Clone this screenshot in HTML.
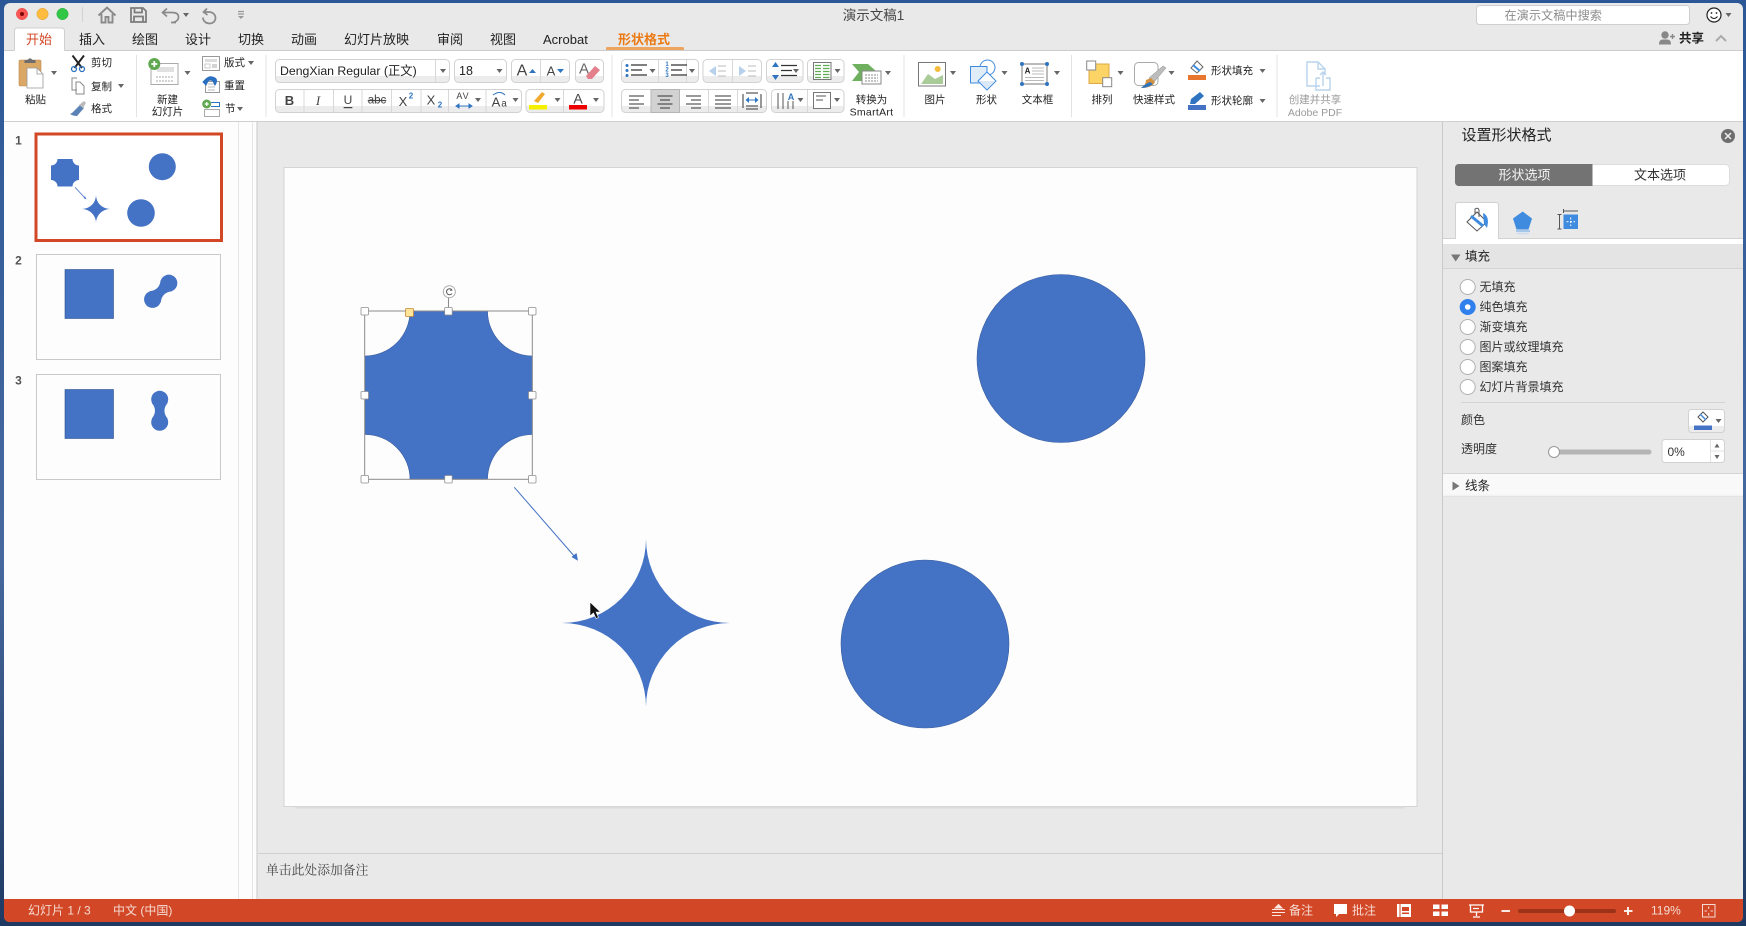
<!DOCTYPE html>
<html lang="zh-CN"><head><meta charset="utf-8"><title>演示文稿1</title>
<style>
html,body{margin:0;padding:0;width:1746px;height:926px;overflow:hidden;background:#2a5590}
svg{display:block;filter:blur(.3px)}
text{font-family:"Liberation Sans","Noto Sans CJK SC",sans-serif;dominant-baseline:central;fill:#222}
.m{text-anchor:middle}
.t{font-size:13px}.r{font-size:10.5px}.g{fill:#9a9a9a}
.p{font-size:12px;fill:#333}.w{fill:#f6dcd4;font-size:12px}
.l{stroke:#d8d8d8;stroke-width:1}
.gl{fill:url(#btn);stroke:#d2d2d2;stroke-width:1}
.h{fill:#fff;stroke:#8f8f8f;stroke-width:.8}
</style></head><body>
<svg width="1746" height="926" viewBox="0 0 1746 926" xmlns="http://www.w3.org/2000/svg">
<defs>
<linearGradient id="desk" x1="0" y1="0" x2="0" y2="1"><stop offset="0" stop-color="#2b5797"/><stop offset=".6" stop-color="#47699f"/><stop offset="1" stop-color="#1e3a63"/></linearGradient>
<linearGradient id="btn" x1="0" y1="0" x2="0" y2="1"><stop offset="0" stop-color="#fff"/><stop offset=".72" stop-color="#fff"/><stop offset=".72" stop-color="#ececec"/><stop offset="1" stop-color="#ececec"/></linearGradient>
<path id="a" d="M-3-2H3L0 2z" fill="#666"/>
<path id="lines" d="M0 0H16M0 5H11M0 10H16" stroke="#333" stroke-width="1.2" fill="none"/>
<g id="db" fill="#4472c4"><circle cx="0" cy="-11.500" r="8.500"/><circle cx="0" cy="11.500" r="8.500"/><path d="M-8-8Q-1.500 0-8 8H8Q1.500 0 8-8z"/></g>
</defs>
<rect width="1746" height="926" fill="url(#desk)"/>
<!-- window -->
<rect x="4" y="3" width="1739" height="919" rx="6" fill="#e9e9e9"/>
<!-- titlebar -->
<circle cx="22" cy="14" r="5.700" fill="#fc5753" stroke="#df4744" stroke-width=".5"/><circle cx="22" cy="14" r="2" fill="#7e0508"/>
<circle cx="42.500" cy="14" r="5.700" fill="#fdbc40" stroke="#de9f34" stroke-width=".5"/>
<circle cx="62.500" cy="14" r="5.700" fill="#33c748" stroke="#27aa35" stroke-width=".5"/>
<path d="M82.500 7V22" stroke="#d2d2d2"/>
<path d="M98.500 15.500l8.500-8 8.500 8M101.500 14V22.500H105.500V17H108.500V22.500H112.500V14" fill="none" stroke="#8a8a8a" stroke-width="1.900"/>
<path d="M131 8H143L146 11V22H131z M134.500 8V12.500H142V8 M134 22V16.500H143V22" fill="none" stroke="#7d7d7d" stroke-width="1.800"/>
<path d="M176 22.500H171C176 22.500 178.500 20 178.500 17 178.500 14 176 12.500 172 12.500H163M167 8.500L162.500 12.500 167 16.500" fill="none" stroke="#8a8a8a" stroke-width="1.700"/>
<use href="#a" x="186" y="15"/>
<path d="M207 8.500L203.500 12 207.500 15M204 12H209C212.800 12 215.500 14.800 215.500 18 215.500 21 213 23.500 209.500 23.500 206 23.500 203 21 203 17.500" fill="none" stroke="#8a8a8a" stroke-width="1.700"/>
<path d="M238 11.500H244M238 14H244" stroke="#999" stroke-width="1.200"/><path d="M238 16H244L241 19z" fill="#999"/>
<text x="873.500" y="15.500" class="m" style="font-size:13.500px;fill:#444">演示文稿1</text>
<rect x="1476.500" y="5.500" width="213" height="19" rx="3" fill="#fff" stroke="#cfcfcf"/>
<text x="1504.500" y="15.500" style="font-size:12.200px;fill:#8c8c8c">在演示文稿中搜索</text>
<circle cx="1714" cy="15" r="7" fill="#fff" stroke="#222" stroke-width="1.200"/><circle cx="1711.500" cy="13" r=".9" fill="#222"/><circle cx="1716.500" cy="13" r=".9" fill="#222"/><path d="M1710.500 16.500Q1714 20.500 1717.500 16.500" fill="none" stroke="#222"/>
<use href="#a" x="1728.500" y="15"/>
<!-- tabs -->
<path d="M14.500 51V31Q14.500 28 17.500 28H61.500Q64.500 28 64.500 31V51z" fill="#fff" stroke="#d0d0d0"/>
<text x="26" y="39.500" class="t" style="fill:#d24726">开始</text>
<text x="79" y="39.500" class="t">插入</text><text x="132" y="39.500" class="t">绘图</text><text x="185" y="39.500" class="t">设计</text><text x="238" y="39.500" class="t">切换</text><text x="291" y="39.500" class="t">动画</text><text x="344" y="39.500" class="t">幻灯片放映</text><text x="437" y="39.500" class="t">审阅</text><text x="490" y="39.500" class="t">视图</text><text x="543" y="39.500" class="t">Acrobat</text>
<text x="618" y="39.500" class="t" style="fill:#ec7a14;font-weight:700">形状格式</text>
<rect x="606" y="47" width="78" height="4" rx="1.500" fill="#eda45f"/>
<path d="M1659 44Q1659 39.500 1663 39.500H1667Q1671 39.500 1671 44V44.500H1659z" fill="#888"/><circle cx="1665" cy="35" r="3.700" fill="#888"/><path d="M1670 36.500H1675M1672.500 34V39" stroke="#888" stroke-width="1.400"/>
<text x="1679" y="38.500" style="font-size:12.500px;font-weight:700;fill:#222">共享</text>
<path d="M1716 41l5-5 5 5" fill="none" stroke="#aaa" stroke-width="2"/>
<!-- ribbon -->
<rect x="4" y="50.500" width="1739" height="71" fill="#fff"/>
<path d="M4 50.500H14.500M64.500 50.500H1743" stroke="#cccccc"/>
<path d="M4 121.500H1743" stroke="#d0d0d0"/>
<path d="M136.500 55V117M266 55V117M612 55V117M904 55V117M1071.500 55V117M1277 55V117" stroke="#e3e3e3"/>
<!-- clipboard -->
<rect x="19" y="60" width="22" height="26" rx="1.500" fill="#dba765" stroke="#b98a4f" stroke-width=".6"/>
<path d="M24.500 63V60H27.500Q30 56.500 32.500 60H35.500V63z" fill="#6d6d6d"/>
<path d="M27 68H37L43 74V88H27z" fill="#fff" stroke="#999" stroke-width=".8"/><path d="M37 68V74H43" fill="none" stroke="#999" stroke-width=".8"/>
<use href="#a" x="54" y="73"/>
<text x="35.500" y="100" class="m r">粘贴</text>
<!-- scissors -->
<path d="M72.500 55.500L82 68M84 55.500L74.500 68" stroke="#222" stroke-width="1.900"/><circle cx="74" cy="69" r="2.500" fill="none" stroke="#2f74c0" stroke-width="1.300"/><circle cx="82" cy="69" r="2.500" fill="none" stroke="#2f74c0" stroke-width="1.300"/>
<text x="91" y="63" class="r">剪切</text>
<path d="M72 84V90H77M77 78H72V90M76 82H80L84 86V94H76z" fill="#fff" stroke="#888"/>
<text x="91" y="87" class="r">复制</text><use href="#a" x="121" y="86"/>
<path d="M72 113L80 105 84 108 77 116Q73 116 70 114z" fill="#5b82b5"/><path d="M79 105L84 101 86 103 83 108z" fill="#bbb"/>
<text x="91" y="109" class="r">格式</text>
<!-- new slide -->
<rect x="151" y="63.500" width="27" height="21" fill="#fff" stroke="#aaa"/><rect x="157" y="67" width="17" height="5" fill="#e0e0e0"/><path d="M156 77H173M156 81H173" stroke="#aaa" stroke-dasharray="2 1"/>
<circle cx="154.300" cy="64" r="6" fill="#5fa84f"/><path d="M151.300 64H157.300M154.300 61V67" stroke="#fff" stroke-width="1.800"/>
<use href="#a" x="187.500" y="73"/>
<text x="167.500" y="100" class="m r">新建</text><text x="167.500" y="112" class="m r">幻灯片</text>
<rect x="202.500" y="56.500" width="17" height="14" fill="#fff" stroke="#999"/><rect x="205" y="59" width="12" height="3" fill="#ddd"/><rect x="205" y="64" width="5" height="4" fill="#fff" stroke="#aaa" stroke-width=".6"/><path d="M212 65H217M212 67H217" stroke="#aaa"/>
<text x="224" y="63" class="r">版式</text><use href="#a" x="251" y="63"/>
<rect x="205.500" y="81.500" width="14" height="11" fill="#fff" stroke="#999"/><path d="M208 84H215M208 87H215M208 90H215" stroke="#bbb"/><path d="M203 82L206 85 208 81Q210 79 213 81L215 85Q218 80 215 78 210 75 206 79z" fill="#2a6fc0" stroke="#2a6fc0"/>
<text x="224" y="86" class="r">重置</text>
<rect x="204.500" y="109.500" width="15" height="7" fill="#fff" stroke="#aaa"/><path d="M211 102.500H219.500V106.500H211" fill="none" stroke="#2f74c0"/><circle cx="206.700" cy="104" r="4.500" fill="#5fa84f"/><path d="M204.700 104H208.700M206.700 102V106" stroke="#fff" stroke-width="1.300"/>
<text x="225" y="109" class="r">节</text><use href="#a" x="240" y="109"/>
<!-- font row -->
<rect class="gl" x="275.500" y="59.500" width="174" height="23" rx="4"/><path d="M435.500 60V82" class="l"/>
<text x="280" y="71" style="font-size:12.300px">DengXian Regular (正文)</text><use href="#a" x="443" y="71"/>
<rect class="gl" x="454.500" y="59.500" width="52" height="23" rx="4"/><text x="459" y="71" style="font-size:12.500px">18</text><use href="#a" x="499.500" y="71"/>
<rect class="gl" x="511.500" y="59.500" width="58" height="23" rx="4"/><path d="M540.500 60V82" class="l"/>
<text x="522" y="71" class="m" style="font-size:16px;fill:#444">A</text><path d="M529 73H536L532.500 69z" fill="#2f74c0"/>
<text x="551" y="71" class="m" style="font-size:13px;fill:#444">A</text><path d="M557 69H564L560.500 73z" fill="#2f74c0"/>
<rect class="gl" x="575.500" y="59.500" width="28" height="23" rx="4"/>
<text x="584" y="69" class="m" style="font-size:15px;fill:#666">A</text><path d="M586 76L595 66 600 70 592 79H588z" fill="#e4808c"/>
<rect class="gl" x="275.500" y="89.500" width="246" height="23" rx="4"/>
<path d="M304 90V112M333.500 90V112M362 90V112M391.500 90V112M421 90V112M448.500 90V112M486 90V112" class="l"/>
<text x="289.500" y="100.500" class="m" style="font-size:13px;font-weight:700;fill:#444">B</text>
<text x="318" y="100.500" class="m" style="font-size:13px;font-style:italic;font-family:'Liberation Serif';fill:#444">I</text>
<text x="348" y="100" class="m" style="font-size:12px;fill:#444;text-decoration:underline">U</text>
<text x="377" y="100.500" class="m" style="font-size:11.500px;fill:#444;text-decoration:line-through">abc</text>
<text x="403" y="101.500" class="m" style="font-size:13px;fill:#444">X</text><text x="411" y="96" class="m" style="font-size:8px;font-weight:700;fill:#2f74c0">2</text>
<text x="431" y="100" class="m" style="font-size:13px;fill:#444">X</text><text x="440" y="105" class="m" style="font-size:8px;font-weight:700;fill:#2f74c0">2</text>
<text x="463" y="96" class="m" style="font-size:9px;letter-spacing:1px;fill:#444">AV</text><path d="M456 106H472M456 106l3-2v4zM472 106l-3-2v4z" stroke="#2f74c0" fill="#2f74c0"/>
<use href="#a" x="478" y="100"/>
<text x="496" y="102" class="m" style="font-size:13px;fill:#444">A</text><text x="504" y="104" class="m" style="font-size:10px;fill:#444">a</text><path d="M493 95Q500 90 505 95" stroke="#2f74c0" fill="none"/>
<use href="#a" x="515.500" y="100"/>
<rect class="gl" x="526" y="89.500" width="78" height="23" rx="4"/><path d="M563.500 90V112" class="l"/>
<path d="M534 101L542 92 545 94 538 103z" fill="#f0a92e"/><rect x="529" y="105" width="18" height="4.500" fill="#f5ef00"/><use href="#a" x="557.500" y="100"/>
<text x="578" y="98.500" class="m" style="font-size:14px;fill:#444">A</text><rect x="569" y="105" width="18" height="4.500" fill="#ee0000"/><use href="#a" x="596" y="100"/>
<!-- para -->
<rect class="gl" x="621.500" y="59.500" width="77" height="23" rx="4"/><path d="M658.500 60V82M686.500 60V82" class="l"/>
<circle cx="627" cy="65.500" r="1.500" fill="#2f74c0"/><circle cx="627" cy="70.500" r="1.500" fill="#2f74c0"/><circle cx="627" cy="75.500" r="1.500" fill="#2f74c0"/><use href="#lines" x="631" y="65"/><use href="#a" x="652.500" y="71"/>
<text x="667" y="70.500" class="m" style="font-size:6px;font-weight:700;fill:#2f74c0;">2</text><text x="667" y="65" class="m" style="font-size:6px;font-weight:700;fill:#2f74c0">1</text><text x="667" y="76" class="m" style="font-size:6px;font-weight:700;fill:#2f74c0">3</text><use href="#lines" x="671" y="65"/><use href="#a" x="692" y="71"/>
<rect class="gl" x="703" y="59.500" width="58.500" height="23" rx="4"/><path d="M732.500 60V82" class="l"/>
<path d="M709 71L716 66V76z" fill="#b7d0ec"/><path d="M718 66H726M718 71H726M718 76H726" stroke="#bbb"/><path d="M746 71L739 66V76z" fill="#b7d0ec"/><path d="M748 66H756M748 71H756M748 76H756" stroke="#bbb"/>
<rect class="gl" x="766.500" y="59.500" width="36.500" height="23" rx="4"/><path d="M772 67L775.500 62 779 67zM772 75L775.500 80 779 75z" fill="#2f74c0"/><use href="#lines" x="781" y="65.500"/><use href="#a" x="796" y="71"/>
<rect class="gl" x="807.500" y="59.500" width="36.500" height="23" rx="4"/><rect x="813.500" y="62.500" width="17.500" height="17" fill="#fff" stroke="#777"/><path d="M815 65.500H821M823 65.500H829.500M815 68.500H821M823 68.500H829.500M815 71.500H821M823 71.500H829.500M815 74.500H821M823 74.500H829.500M815 77.500H821M823 77.500H829.500" stroke="#62ad54" stroke-width="1.300"/><use href="#a" x="837.500" y="71"/>
<rect class="gl" x="621.500" y="89.500" width="145" height="23" rx="4"/><rect x="651" y="89.500" width="28.500" height="23" fill="#d2d2d2" stroke="#b5b5b5"/><path d="M708.500 90V112M737.500 90V112" class="l"/>
<path d="M629 96H644M629 100H639M629 104H644M629 108H639" stroke="#333"/>
<path d="M657.500 96H672.500M660 100H670M657.500 104H672.500M660 108H670" stroke="#333"/>
<path d="M686 96H701M691 100H701M686 104H701M691 108H701" stroke="#333"/>
<path d="M715 96H731M715 100H731M715 104H731M715 108H731" stroke="#333"/>
<path d="M743 94V108M761 94V108" stroke="#333"/><path d="M746 100H758" stroke="#2f74c0"/><path d="M745.500 100L749 97V103zM758.500 100L755 97V103z" fill="#2f74c0"/><path d="M746 106H758M746 109H758M746 93H758" stroke="#333"/>
<rect class="gl" x="771.500" y="89.500" width="72.500" height="23" rx="4"/><path d="M807.500 90V112" class="l"/>
<path d="M778 93V109M783 93V109M788 101V109M793 101V109" stroke="#555"/><text x="791" y="97" class="m" style="font-size:9px;font-weight:700;fill:#2f74c0">A</text><use href="#a" x="800.500" y="100"/>
<rect x="813.500" y="92.500" width="17" height="16" fill="#fff" stroke="#777"/><path d="M816 96H826M816 100H823" stroke="#555"/><use href="#a" x="837" y="100"/>
<!-- smartart -->
<path d="M852 64H868L877 72 870 81H852L859 72z" fill="#6eb05e"/><rect x="862" y="71" width="19" height="13" fill="#fff" stroke="#888"/><path d="M865 75H878M865 78H878M865 81H878" stroke="#888" stroke-dasharray="2 1"/>
<use href="#a" x="888" y="73"/>
<text x="871.500" y="100" class="m r">转换为</text><text x="871.500" y="112.500" class="m" style="font-size:10.500px;letter-spacing:.3px">SmartArt</text>
<!-- insert -->
<rect x="918.500" y="62.500" width="27" height="23.500" fill="#fff" stroke="#777"/><path d="M921 84L928 74 935 79 943 75V84z" fill="#a8cb98"/><circle cx="937.700" cy="69" r="3" fill="#f3bc3e"/>
<use href="#a" x="953" y="73"/><text x="935" y="100" class="m r">图片</text>
<circle cx="987.500" cy="67.500" r="7.500" fill="#fff" stroke="#3f8be0"/><rect x="970.500" y="66.500" width="16.500" height="16.500" fill="#e1ecf9" stroke="#3f8be0"/><path d="M987 72L996 81 987 90 978 81z" fill="#fff" stroke="#3f8be0"/><path d="M979 81H995L987 89.300z" fill="#dbe8f8"/>
<use href="#a" x="1004.500" y="73"/><text x="986.500" y="100" class="m r">形状</text>
<rect x="1022" y="64" width="25" height="20" fill="#fff" stroke="#777"/><text x="1027.500" y="71" class="m" style="font-size:8px;font-weight:700">A</text><path d="M1032 68H1044M1032 71H1044M1032 74H1044M1025 77.500H1044M1025 80.500H1044" stroke="#bbb"/>
<circle cx="1022" cy="64" r="2" fill="#2f74c0"/><circle cx="1047" cy="64" r="2" fill="#2f74c0"/><circle cx="1022" cy="84" r="2" fill="#2f74c0"/><circle cx="1047" cy="84" r="2" fill="#2f74c0"/>
<use href="#a" x="1057" y="73"/><text x="1037.500" y="100" class="m r">文本框</text>
<rect x="1089" y="64" width="20" height="19.500" fill="#fcd466" stroke="#dba945"/><rect x="1086.700" y="61" width="9" height="9" fill="#fff" stroke="#888"/><rect x="1102.700" y="77.700" width="9" height="9" fill="#fff" stroke="#888"/>
<use href="#a" x="1120.500" y="73"/><text x="1102" y="100" class="m r">排列</text>
<rect x="1134.500" y="62.500" width="23.500" height="23" rx="4" fill="#fff" stroke="#aaa"/><path d="M1149 78L1163 66 1166 68 1154 82z" fill="#bdbdbd" stroke="#888" stroke-width=".5"/><path d="M1146 80L1151 78 1155 82Q1152 88 1141 88 1146 85 1146 80z" fill="#d4903c"/><path d="M1141 88Q1148 88 1153 84L1150 82Q1145 84 1141 88z" fill="#2f74c0"/>
<use href="#a" x="1171.500" y="73"/><text x="1154" y="100" class="m r">快速样式</text>
<path d="M1191 68L1197 61 1203 67 1197 73z" fill="#fff" stroke="#666"/><path d="M1193 65L1200 71" stroke="#3f8be0" stroke-width="2"/><rect x="1188" y="75" width="18" height="5" fill="#e8762f"/>
<path d="M1190 104L1191 99 1200 92 1204 96 1195 104z" fill="#2f74c0"/><rect x="1188" y="105" width="18" height="5" fill="#4472c4"/>
<text x="1211" y="71" class="r">形状填充</text><use href="#a" x="1262.500" y="71"/>
<text x="1211" y="101" class="r">形状轮廓</text><use href="#a" x="1262.500" y="101"/>
<path d="M1320 86H1307V62H1318L1325 69V75M1318 62V69H1325" fill="none" stroke="#b9d3ee" stroke-width="1.400"/><path d="M1316 78V90H1330V78H1326M1320 78H1316M1323 86V72M1320 75L1323 72 1326 75" fill="none" stroke="#b9d3ee" stroke-width="1.400"/>
<text x="1315" y="100" class="m r g">创建并共享</text><text x="1315" y="113" class="m r g">Adobe PDF</text>
<!-- slide panel -->
<rect x="4" y="122" width="252.500" height="777" fill="#fdfdfd"/>
<path d="M238.500 122V899M252.500 122V899" stroke="#e6e6e6"/><path d="M257 122V899" stroke="#c9c9c9"/>
<rect x="258" y="122" width="1184" height="777" fill="#e9e9e9"/>
<text x="18.500" y="140.500" class="m" style="font-size:12px;font-weight:700;fill:#555">1</text>
<text x="18.500" y="260.500" class="m" style="font-size:12px;font-weight:700;fill:#555">2</text>
<text x="18.500" y="380.500" class="m" style="font-size:12px;font-weight:700;fill:#555">3</text>
<!-- thumb 1 -->
<rect x="36" y="134" width="185.500" height="106.500" fill="#fff" stroke="#d24726" stroke-width="3"/>
<g fill="#4472c4">
<path d="M57.500 159H72.500A6.500 6.500 0 0 0 79 165.500V180A6.500 6.500 0 0 0 72.500 186.500H57.500A6.500 6.500 0 0 0 51 180V165.500A6.500 6.500 0 0 0 57.500 159z"/>
<circle cx="162.300" cy="166.700" r="13.500"/><circle cx="141" cy="213" r="13.800"/>
<path d="M96 195A14 14 0 0 0 110 209 14 14 0 0 0 96 223 14 14 0 0 0 82 209 14 14 0 0 0 96 195z"/>
</g>
<path d="M75 187.300L85 198" stroke="#4472c4" stroke-width=".8"/><path d="M86.500 199.500L83.500 198 85 196.300z" fill="#4472c4"/>
<!-- thumb 2 -->
<rect x="36.500" y="254.500" width="184" height="105" fill="#fdfdfd" stroke="#c9c9c9"/>
<rect x="65" y="269.500" width="48.500" height="49" fill="#4472c4" stroke="#2f528f" stroke-width=".6"/>
<use href="#db" transform="translate(160.700 291.300) rotate(45)"/>
<!-- thumb 3 -->
<rect x="36.500" y="374.500" width="184" height="105" fill="#fdfdfd" stroke="#c9c9c9"/>
<rect x="65" y="389.500" width="48.500" height="49" fill="#4472c4" stroke="#2f528f" stroke-width=".6"/>
<use href="#db" transform="translate(159.700 410.800)"/>
<!-- main slide -->
<rect x="284" y="167.500" width="1133" height="639" fill="#fdfdfd" stroke="#d4d4d4"/>
<path d="M295 807.500H1405" stroke="#dcdcdc" stroke-width="2"/>
<g fill="#4472c4" stroke="#3a5f9f" stroke-width=".6">
<circle cx="1061" cy="358.500" r="84"/>
<circle cx="925" cy="644" r="84"/>
<path d="M646 539A84 84 0 0 0 730 623 84 84 0 0 0 646 707 84 84 0 0 0 562 623 84 84 0 0 0 646 539z" stroke="none"/>
<path d="M410 311H487.500A45 45 0 0 0 532.300 356V434.500A45 45 0 0 0 487.500 479.300H410A45 45 0 0 0 365 434.500V356A45 45 0 0 0 410 311z"/>
</g>
<path d="M514.300 487.300L575 557" stroke="#4472c4"/><path d="M578 560.700L571.500 557 576.500 553z" fill="#4472c4"/>
<rect x="364.700" y="311" width="167.600" height="168.300" fill="none" stroke="#8c8c8c"/>
<path d="M448.500 297V311" stroke="#8c8c8c"/>
<circle cx="449.300" cy="291.700" r="6" fill="#fff" stroke="#aaa"/><path d="M452 290A3 3 0 1 0 452 293.500" fill="none" stroke="#555"/><path d="M451 288.500L452.500 290.500 450 291z" fill="#555"/>
<g class="h"><rect class="h" x="361" y="307.500" width="7.500" height="7.500" rx="1"/><rect class="h" x="444.700" y="307.500" width="7.500" height="7.500" rx="1"/><rect class="h" x="528.500" y="307.500" width="7.500" height="7.500" rx="1"/><rect class="h" x="361" y="391.500" width="7.500" height="7.500" rx="1"/><rect class="h" x="528.500" y="391.500" width="7.500" height="7.500" rx="1"/><rect class="h" x="361" y="475.500" width="7.500" height="7.500" rx="1"/><rect class="h" x="444.700" y="475.500" width="7.500" height="7.500" rx="1"/><rect class="h" x="528.500" y="475.500" width="7.500" height="7.500" rx="1"/></g>
<rect x="405.500" y="308.500" width="8" height="8" rx="1" fill="#ffe59a" stroke="#c4873a" stroke-width=".8"/>
<path d="M590 602V616L593.500 613 596 618.500 598.500 617.500 596 612H600.500z" fill="#111" stroke="#fff" stroke-width=".6"/>
<!-- notes -->
<path d="M258 853.500H1442" stroke="#cfcfcf"/>
<text x="266" y="870.500" style="font-size:12.800px;fill:#444;font-family:'Liberation Serif','Noto Serif CJK SC',serif">单击此处添加备注</text>
<!-- right pane -->
<rect x="1443" y="122" width="300" height="777" fill="#e9e9e9"/>
<path d="M1442.500 122V899" stroke="#c9c9c9"/>
<text x="1461.500" y="135.500" style="font-size:15px;fill:#222">设置形状格式</text>
<circle cx="1728" cy="136" r="7" fill="#6d6d6d"/><path d="M1725 133L1731 139M1731 133L1725 139" stroke="#eee" stroke-width="1.500"/>
<rect x="1455.500" y="164.500" width="274" height="21" rx="4" fill="#fff" stroke="#dcdcdc"/>
<path d="M1592.500 164H1459.500A4 4 0 0 0 1455 168.500V181.500A4 4 0 0 0 1459.500 186H1592.500z" fill="#737373"/>
<text x="1524.500" y="175" class="m" style="font-size:13px;fill:#f4f4f4">形状选项</text>
<text x="1660" y="175" class="m" style="font-size:13px;fill:#333">文本选项</text>
<rect x="1443" y="238.500" width="300" height="6" fill="#fff"/>
<path d="M1443 238.500H1743" stroke="#d2d2d2"/>
<path d="M1455.500 238.500V205Q1455.500 202.500 1458 202.500H1496Q1498.500 202.500 1498.500 205V238.500z" fill="#fff" stroke="#d2d2d2"/><rect x="1456" y="238" width="42" height="2" fill="#fff"/>
<path d="M1467 222L1477 212 1487 222 1477 231z" fill="#fff" stroke="#555"/><path d="M1471 216L1483 226" stroke="#3f8be0" stroke-width="3"/><path d="M1475 214V209Q1478 207 1479 210V217" fill="none" stroke="#555"/><path d="M1483 213Q1490 216 1487 228L1484 224Z" fill="#3f8be0"/>
<path d="M1522.700 211.500L1532 218.500 1528.500 229.500H1516.500L1513 218.500z" fill="#3f8be0"/><path d="M1516 231H1530" stroke="#8fbaea" stroke-width="1.500"/><path d="M1517 233.500H1529" stroke="#c9dcf3" stroke-width="1.500"/>
<rect x="1563.500" y="214.500" width="14.500" height="14.500" fill="#3f8be0"/><path d="M1570.700 217.500V226M1566.500 221.700H1575" stroke="#fff" stroke-dasharray="2 1.500"/><path d="M1563.500 211H1578M1563.500 209V213" stroke="#555"/><path d="M1559.500 214.500V229M1557.500 214.500H1561.500M1557.500 229H1561.500" stroke="#555"/>
<rect x="1443" y="244" width="300" height="24" fill="#e4e4e4"/><path d="M1443 268.500H1743" stroke="#d4d4d4"/>
<path d="M1451 254.500H1460.500L1455.700 261.500z" fill="#777"/>
<text x="1465" y="256.500" style="font-size:12.500px">填充</text>
<g fill="#fff" stroke="#b0b0b0"><circle cx="1467.700" cy="287" r="7.500"/><circle cx="1467.700" cy="327" r="7.500"/><circle cx="1467.700" cy="347" r="7.500"/><circle cx="1467.700" cy="367" r="7.500"/><circle cx="1467.700" cy="387" r="7.500"/></g>
<circle cx="1467.700" cy="307" r="8" fill="#2f7fed"/><circle cx="1467.700" cy="307" r="2.800" fill="#fff"/>
<text x="1479.500" y="287" class="p">无填充</text><text x="1479.500" y="307" class="p">纯色填充</text><text x="1479.500" y="327" class="p">渐变填充</text><text x="1479.500" y="347" class="p">图片或纹理填充</text><text x="1479.500" y="367" class="p">图案填充</text><text x="1479.500" y="387" class="p">幻灯片背景填充</text>
<path d="M1461 402.500H1725" stroke="#d4d4d4"/>
<text x="1461" y="420" class="p">颜色</text>
<rect x="1688.500" y="409.500" width="36" height="23" rx="3" fill="url(#btn)" stroke="#d2d2d2"/><path d="M1698 417L1703 412 1708 417 1703 422z" fill="#fff" stroke="#555"/><path d="M1700 414L1706 420" stroke="#3f8be0" stroke-width="1.500"/><rect x="1694" y="425.500" width="18" height="4.500" fill="#4472c4"/><use href="#a" x="1718.500" y="421"/>
<text x="1461" y="449" class="p">透明度</text>
<rect x="1548" y="449.500" width="103.500" height="5" rx="2.500" fill="#b5b5b5"/><circle cx="1554" cy="452" r="5.500" fill="#fff" stroke="#999"/>
<rect x="1662" y="439.500" width="62.500" height="23" rx="3" fill="#fff" stroke="#d2d2d2"/><text x="1667.500" y="452" style="font-size:12px;fill:#333">0%</text>
<path d="M1710.500 440V462M1711 451H1724" stroke="#e2e2e2"/><path d="M1714.500 447.500H1719.500L1717 443.500z" fill="#666"/><path d="M1714.500 455H1719.500L1717 459z" fill="#666"/>
<rect x="1443" y="474" width="300" height="20.500" fill="#f9f9f9"/><path d="M1443 473.500H1743M1443 496.500H1743" stroke="#d4d4d4"/><rect x="1443" y="494.500" width="300" height="2" fill="#f2f2f2"/>
<path d="M1452.500 481.500V490.500L1459.500 486z" fill="#777"/>
<text x="1465" y="486" style="font-size:12.500px">线条</text>
<!-- status bar -->
<path d="M4 899H1743V916Q1743 922 1737 922H10Q4 922 4 916z" fill="#d24726"/>
<text x="28" y="910.500" class="w">幻灯片 1 / 3</text><text x="113" y="910.500" class="w">中文 (中国)</text>
<path d="M1278.500 904.500L1275 908H1282zM1272 909.500H1285M1272 912.500H1285M1272 915.500H1281" stroke="#fce8e1" fill="#fce8e1"/>
<text x="1289" y="910.500" class="w">备注</text>
<path d="M1334 904H1347V914H1339L1336 917V914H1334z" fill="#fff"/>
<text x="1352" y="910.500" class="w">批注</text>
<path d="M1397 904H1411V917H1397z" fill="#fff"/><rect x="1402" y="907" width="7" height="4" fill="#d24726"/><rect x="1402" y="912.500" width="7" height="1.500" fill="#d24726"/><rect x="1399.500" y="904" width="1" height="13" fill="#d24726"/>
<g fill="#fff"><rect x="1433" y="904.500" width="6.500" height="4.500"/><rect x="1441.500" y="904.500" width="6.500" height="4.500"/><rect x="1433" y="911.500" width="6.500" height="4.500"/><rect x="1441.500" y="911.500" width="6.500" height="4.500"/></g>
<path d="M1469 905H1484M1470.500 905V912H1482.500V905M1476.500 912V916M1473 917H1480M1473 908.500H1479" fill="none" stroke="#fff" stroke-width="1.300"/>
<path d="M1501.500 911H1510M1624 911H1632.500M1628 907V915" stroke="#fff" stroke-width="1.800"/>
<rect x="1518" y="909" width="98" height="4" rx="2" fill="#9c3218"/><circle cx="1569.500" cy="911" r="5.500" fill="#fff"/>
<text x="1651" y="910.500" class="w">119%</text>
<rect x="1702.500" y="904.500" width="12.500" height="12.500" fill="none" stroke="#f6dcd4"/><path d="M1708.700 906.500V909M1708.700 913V915.500M1704.500 911H1707M1710.500 911H1713" stroke="#f6dcd4"/>
</svg>
</body></html>
